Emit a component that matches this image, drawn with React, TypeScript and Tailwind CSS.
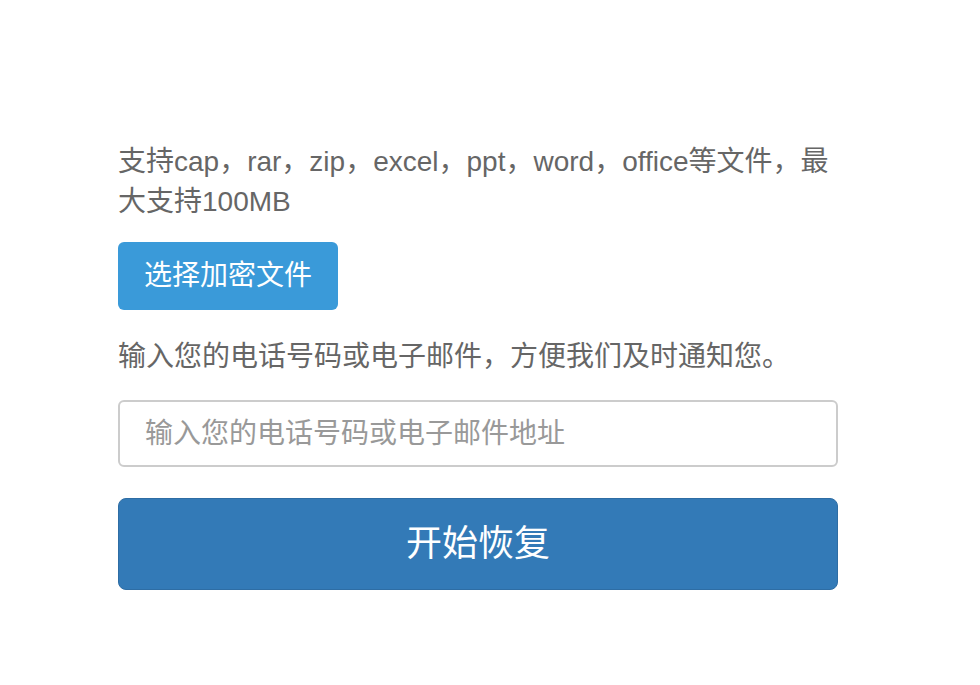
import React from "react";

export default function App() {
  return (
    <div
      className="w-[980px] h-[685px] bg-white"
      style={{ fontFamily: '"Liberation Sans", "Noto Sans CJK SC", sans-serif' }}
    >
      <div className="ml-[118px] w-[720px] pt-[142px] flex flex-col">
        <p className="text-[28px] leading-[40px] text-[#666]">
          支持cap，rar，zip，excel，ppt，word，office等文件，最大支持100MB
        </p>
        <div className="mt-[20px]">
          <button className="h-[68px] px-[26px] rounded-[6px] bg-[#3a9ad9] text-white text-[28px] leading-none">
            选择加密文件
          </button>
        </div>
        <p className="mt-[27px] text-[28px] leading-[40px] text-[#666]">
          输入您的电话号码或电子邮件，方便我们及时通知您。
        </p>
        <input
          className="mt-[23px] h-[67px] w-full rounded-[6px] border-2 border-[#cccccc] px-[25px] text-[28px] text-[#555] placeholder:text-[#999] outline-none"
          placeholder="输入您的电话号码或电子邮件地址"
        />
        <button className="mt-[31px] h-[92px] w-full rounded-[8px] border border-[#2e6da4] bg-[#337ab7] text-white text-[36px] leading-none">
          开始恢复
        </button>
      </div>
    </div>
  );
}
